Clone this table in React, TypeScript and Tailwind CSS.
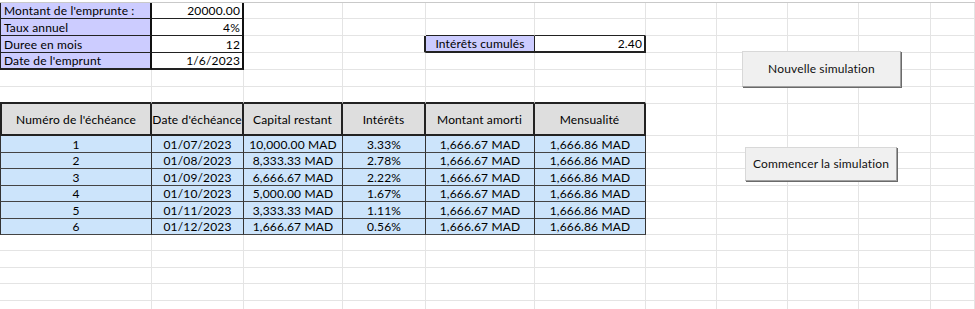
import React from 'react';

type Cell = {
    text?: string;
    align?: 'left' | 'right' | 'center';
    fill?: string;
    edge?: string; // border classes for this cell (right / bottom / extra)
};

const FONT = "font-['Lato','Liberation_Sans',sans-serif]";

const COL_W = [
    'w-[152px]', 'w-[92px]', 'w-[99px]', 'w-[83px]', 'w-[109px]', 'w-[111px]',
    'w-[71px]', 'w-[71px]', 'w-[71px]', 'w-[72px]', 'w-[44px]',
];

const GRID = 'border-r border-b border-r-[#e4e4e4] border-b-[#e4e4e4]';

const ALIGN = {
    left: 'justify-start pl-[3px]',
    right: 'justify-end pr-[2px]',
    center: 'justify-center',
};

const LAVENDER = 'bg-[#ccccff]';
const HEADER = 'bg-[#dedede]';
const BLUE = 'bg-[#cce4fb]';

// loan parameters (A1:B4)
const params: [string, string][] = [
    ["Montant de l'emprunte :", '20000.00'],
    ['Taux annuel', '4%'],
    ['Duree en mois', '12'],
    ["Date de l'emprunt", '1/6/2023'],
];

const headers = [
    "Numéro de l'échéance", "Date d'échéance", 'Capital restant',
    'Intérêts', 'Montant amorti', 'Mensualité',
];

const schedule: string[][] = [
    ['1', '01/07/2023', '10,000.00 MAD', '3.33%', '1,666.67 MAD', '1,666.86 MAD'],
    ['2', '01/08/2023', '8,333.33 MAD', '2.78%', '1,666.67 MAD', '1,666.86 MAD'],
    ['3', '01/09/2023', '6,666.67 MAD', '2.22%', '1,666.67 MAD', '1,666.86 MAD'],
    ['4', '01/10/2023', '5,000.00 MAD', '1.67%', '1,666.67 MAD', '1,666.86 MAD'],
    ['5', '01/11/2023', '3,333.33 MAD', '1.11%', '1,666.67 MAD', '1,666.86 MAD'],
    ['6', '01/12/2023', '1,666.67 MAD', '0.56%', '1,666.67 MAD', '1,666.86 MAD'],
];

const blank = (): Cell[] => Array.from({ length: 11 }, () => ({}));

function buildRows(): { h: string; cells: Cell[] }[] {
    const rows: { h: string; cells: Cell[] }[] = [];

    // rows 1-6
    for (let r = 0; r < 6; r++) {
        const cells = blank();
        if (r < 4) {
            const last = r === 3;
            cells[0] = {
                text: params[r][0], align: 'left', fill: LAVENDER,
                edge: `border-l border-l-[#222] border-r-2 border-r-[#111] ${last ? 'border-b-2' : 'border-b'} border-b-[#222]`,
            };
            cells[1] = {
                text: params[r][1], align: 'right', fill: 'bg-white',
                edge: `border-r-2 border-r-[#111] ${last ? 'border-b-2' : 'border-b'} border-b-[#222]`,
            };
        }
        if (r === 1) {
            // top edge of the cumulative interest box
            cells[4] = { edge: 'border-r border-r-[#e4e4e4] border-b border-b-[#222]' };
            cells[5] = { edge: 'border-r border-r-[#e4e4e4] border-b border-b-[#222]' };
        }
        if (r === 2) {
            cells[3] = { edge: 'border-b border-b-[#e4e4e4] border-r-2 border-r-[#222]' };
            cells[4] = {
                text: 'Intérêts cumulés', align: 'center', fill: LAVENDER,
                edge: 'border-r border-r-[#222] border-b-2 border-b-[#222]',
            };
            cells[5] = {
                text: '2.40', align: 'right', fill: 'bg-white',
                edge: 'border-r-2 border-r-[#222] border-b-2 border-b-[#222]',
            };
        }
        if (r === 5) {
            // top edge of the schedule header
            for (let c = 0; c < 6; c++) {
                cells[c] = { edge: 'border-r border-r-[#e4e4e4] border-b-2 border-b-[#222]' };
            }
        }
        rows.push({ h: r === 0 ? 'h-[16px]' : 'h-[17px]', cells });
    }

    // header row
    const head = blank();
    headers.forEach((t, c) => {
        head[c] = {
            text: t, align: 'center', fill: HEADER,
            edge: `${c === 0 ? 'border-l-2 border-l-[#222] ' : ''}border-r-2 border-r-[#222] border-b-2 border-b-[#222]`,
        };
    });
    rows.push({ h: 'h-[32px]', cells: head });

    // schedule rows
    schedule.forEach((vals, i) => {
        const cells = blank();
        vals.forEach((t, c) => {
            cells[c] = {
                text: t, align: 'center', fill: BLUE,
                edge: `${c === 0 ? 'border-l border-l-[#333] ' : ''}border-r border-r-[#333] border-b border-b-[#444]`,
            };
        });
        rows.push({ h: i % 2 === 0 ? 'h-[17px]' : 'h-[16px]', cells });
    });

    // empty rows under the table
    for (let i = 0; i < 5; i++) {
        rows.push({ h: i % 2 === 0 ? 'h-[16px]' : 'h-[17px]', cells: blank() });
    }
    return rows;
}

function SheetButton({ label, className }: { label: string; className: string }) {
    return (
        <button
            className={`absolute flex items-center justify-center bg-[#f0f0f0] text-[12px] tracking-[0.15px] text-[#111]
                border-t border-l border-t-[#d8d8d8] border-l-[#d8d8d8] border-r border-b border-r-[#a0a0a0] border-b-[#a0a0a0]
                shadow-[1px_1px_0_#6a6a6a] ${className}`}
        >
            {label}
        </button>
    );
}

export default function App() {
    const rows = buildRows();

    return (
        <div className={`relative w-[975px] h-[309px] overflow-hidden bg-white ${FONT} text-[12px] tracking-[0.15px] text-black`}>
            {/* sheet frame line */}
            <div className="h-[3px] border-b border-b-[#c9c9c9]" />

            {rows.map((row, r) => (
                <div key={r} className={`flex ${row.h}`}>
                    {row.cells.map((cell, c) => (
                        <div
                            key={c}
                            className={`flex shrink-0 items-center pt-px leading-none whitespace-nowrap overflow-hidden
                                ${COL_W[c]} ${cell.fill ?? ''} ${cell.edge ?? GRID} ${ALIGN[cell.align ?? 'left']}`}
                        >
                            {cell.text}
                        </div>
                    ))}
                </div>
            ))}

            <SheetButton label="Nouvelle simulation" className="left-[742px] top-[51px] w-[159px] h-[36px]" />
            <SheetButton label="Commencer la simulation" className="left-[745px] top-[147px] w-[152px] h-[34px]" />
        </div>
    );
}
